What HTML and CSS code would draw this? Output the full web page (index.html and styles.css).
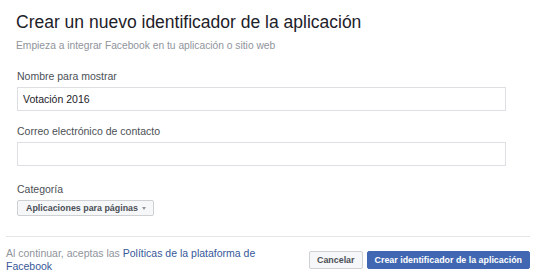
FILE: index.html
```html
<!DOCTYPE html>
<html lang="es">

<head>
  <meta charset="UTF-8">
  <meta name="viewport" content="width=device-width, initial-scale=1.0">
  <title>Crear un nuevo identificador de la aplicación</title>
  <link rel="stylesheet" href="styles.css">
</head>

<body>

  <div class="dialog">
    <div class="dialog-body">
      <h1>Crear un nuevo identificador de la aplicación</h1>
      <p class="subtitle">Empieza a integrar Facebook en tu aplicación o sitio web</p>

      <div class="field">
        <label for="displayName">Nombre para mostrar</label>
        <input type="text" id="displayName" value="Votación 2016" />
      </div>

      <div class="field">
        <label for="contactEmail">Correo electrónico de contacto</label>
        <input type="text" id="contactEmail" />
      </div>

      <div class="field field-category">
        <label>Categoría</label>
        <button class="select">Aplicaciones para páginas <span class="caret"></span></button>
      </div>
    </div>

    <div class="dialog-footer">
      <p class="terms">Al continuar, aceptas las <a href="#">Políticas de la plataforma de</a><br><a href="#">Facebook</a></p>
      <div class="actions">
        <button class="btn">Cancelar</button>
        <button class="btn btn-primary">Crear identificador de la aplicación</button>
      </div>
    </div>
  </div>

</body>

</html>
```

FILE: styles.css
```css
body {
  margin: 0;
  background-color: white;
  font-family: "Liberation Sans", Arial, sans-serif;
  color: #1d2129;
}

.dialog {
  width: 538px;
}

.dialog-body {
  padding: 12px 32px 0 16px;
}

h1 {
  margin: 0;
  font-size: 17.5px;
  line-height: 21px;
  font-weight: normal;
  color: #1d2129;
}

.subtitle {
  margin: 6px 0 18px;
  font-size: 10.25px;
  line-height: 13px;
  color: #90949c;
}

.field {
  margin-bottom: 14px;
  padding-left: 1px;
}

.field label {
  display: block;
  margin-bottom: 4px;
  font-size: 10.5px;
  line-height: 13px;
  color: #4b4f56;
}

.field input {
  display: block;
  box-sizing: border-box;
  width: 489px;
  height: 24px;
  margin: 0;
  padding: 0 5px;
  border: 1px solid #dddfe2;
  font-family: "Liberation Sans", Arial, sans-serif;
  font-size: 10.5px;
  color: #1d2129;
  outline: none;
}

.field-category {
  margin-top: 17px;
  margin-bottom: 20px;
}

.select {
  display: flex;
  align-items: center;
  box-sizing: border-box;
  height: 16px;
  margin: 0;
  padding: 0 7px 0 8px;
  border: 1px solid #ced0d4;
  border-radius: 2px;
  background-color: #f6f7f9;
  font-family: "Liberation Sans", Arial, sans-serif;
  font-size: 8.9px;
  font-weight: bold;
  color: #4b4f56;
}

.caret {
  width: 0;
  height: 0;
  margin-left: 4px;
  border-left: 2.5px solid transparent;
  border-right: 2.5px solid transparent;
  border-top: 3px solid #90949c;
}

.dialog-footer {
  display: flex;
  align-items: center;
  margin: 0 8px 0 6px;
  padding-top: 10px;
  border-top: 1px solid #e5e5e5;
}

.terms {
  flex: 0 0 262px;
  margin: 0;
  font-size: 10.5px;
  line-height: 13px;
  color: #90949c;
}

.terms a {
  color: #365899;
  text-decoration: none;
}

.actions {
  display: flex;
  gap: 4px;
  margin-left: auto;
}

.btn {
  box-sizing: border-box;
  height: 18px;
  margin: 0;
  padding: 0 7px;
  border: 1px solid #ced0d4;
  border-radius: 2px;
  background-color: #f6f7f9;
  font-family: "Liberation Sans", Arial, sans-serif;
  font-size: 8.9px;
  font-weight: bold;
  color: #4b4f56;
  cursor: pointer;
}

.btn-primary {
  padding: 0 7px;
  border-color: #4267b2;
  background-color: #4267b2;
  color: white;
}
```
